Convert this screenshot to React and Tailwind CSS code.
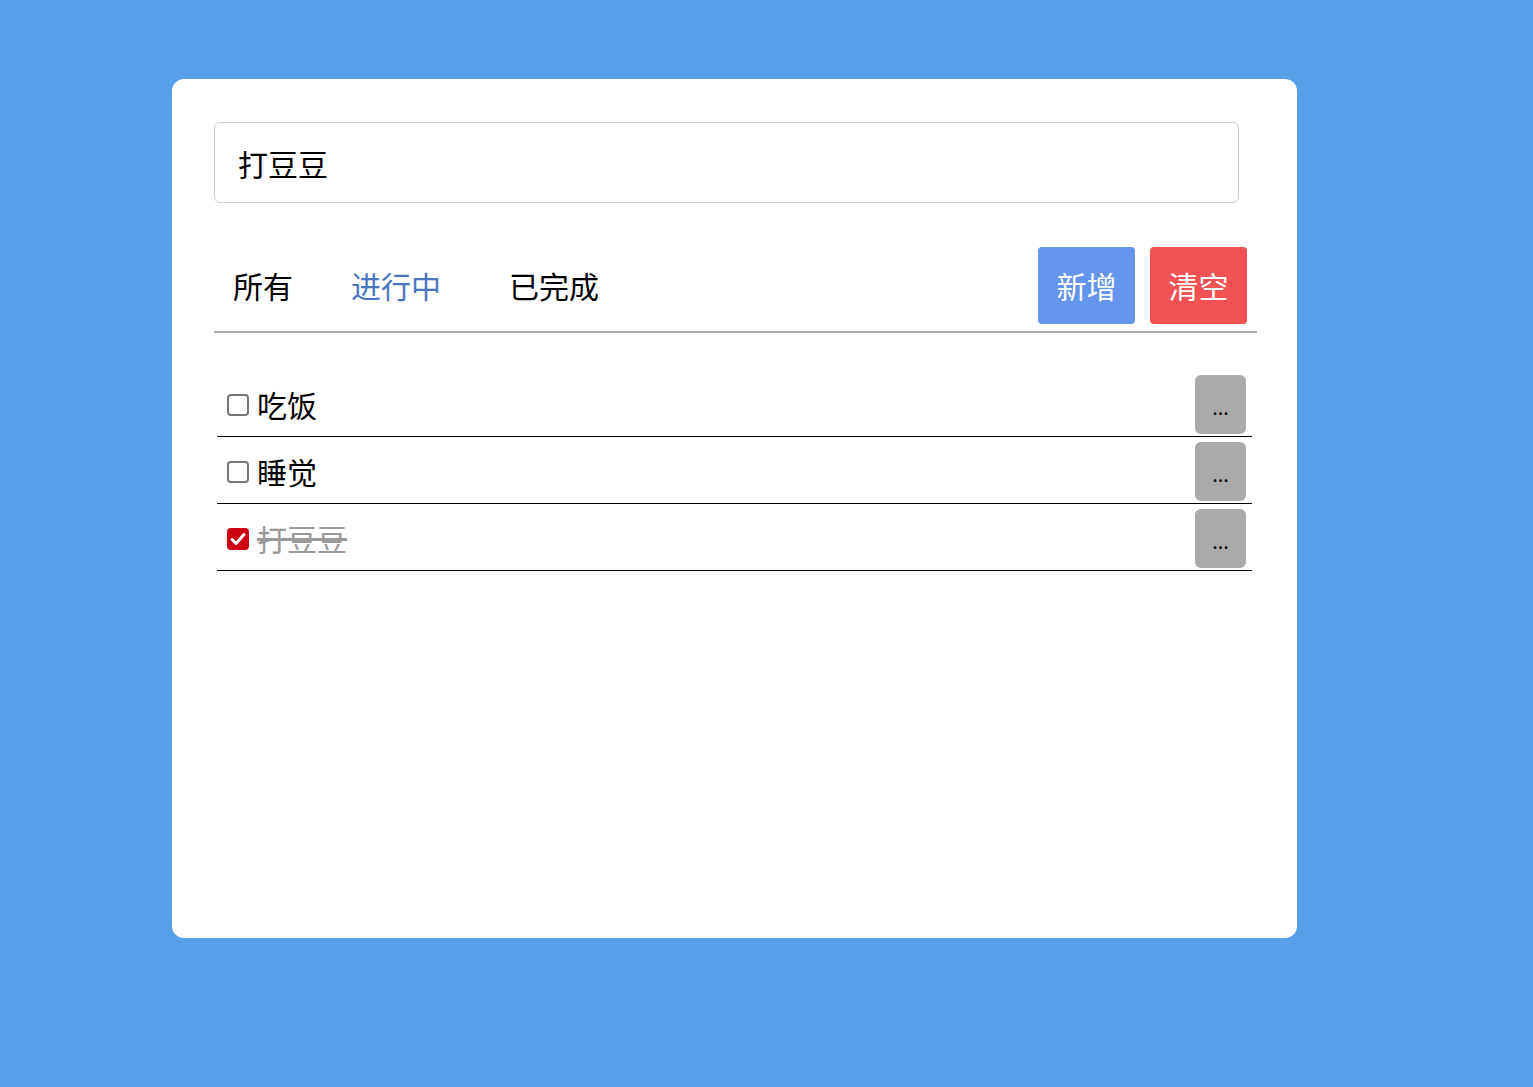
import { useState } from 'react';

const font = { fontFamily: '"Noto Sans CJK SC", "Liberation Sans", sans-serif' };

function Check({ checked, onChange }) {
  return (
    <span className="relative w-[22px] h-[22px] flex-shrink-0">
      <input
        type="checkbox"
        checked={checked}
        onChange={onChange}
        className="appearance-none block w-[22px] h-[22px] m-0 rounded-[4px] border-2 border-[#767676] bg-white checked:bg-[#cc0011] checked:border-[#cc0011]"
      />
      {checked && (
        <svg viewBox="0 0 22 22" className="absolute inset-0 w-[22px] h-[22px] pointer-events-none">
          <path d="M5 11.5l4 4 8-9" fill="none" stroke="white" strokeWidth="3" strokeLinecap="round" strokeLinejoin="round" />
        </svg>
      )}
    </span>
  );
}

export default function App() {
  const [text, setText] = useState('打豆豆');
  const [todos, setTodos] = useState([
    { id: 1, title: '吃饭', done: false },
    { id: 2, title: '睡觉', done: false },
    { id: 3, title: '打豆豆', done: true },
  ]);

  function toggle(id) {
    setTodos(ts => ts.map(t => t.id === id ? { ...t, done: !t.done } : t));
  }

  return (
    <div className="min-h-screen bg-[#56a0ea] pt-[79px] pl-[172px]" style={font}>
      <div className="w-[1125px] h-[859px] bg-white rounded-[12px] pt-[43px] pl-[42px]">
        <input
          value={text}
          onChange={e => setText(e.target.value)}
          className="block w-[1025px] h-[81px] border border-[#cccccc] rounded-[6px] px-[23px] text-[30px] text-black outline-none"
        />

        <div className="mt-[44px] w-[1043px] h-[86px] border-b-2 border-[#aaaaaa] flex items-start pr-[10px]">
          <div className="h-[76px] flex items-center text-[30px] text-black ml-[19px]">所有</div>
          <div className="h-[76px] flex items-center text-[30px] text-[#4a76c0] ml-[58px]">进行中</div>
          <div className="h-[76px] flex items-center text-[30px] text-black ml-[68px]">已完成</div>
          <div className="ml-auto flex gap-[15px]">
            <button className="w-[97px] h-[77px] rounded-[4px] bg-[#6495ed] text-white text-[30px]">新增</button>
            <button className="w-[97px] h-[77px] rounded-[4px] bg-[#f25252] text-white text-[30px]">清空</button>
          </div>
        </div>

        <div className="mt-[37px] ml-[3px] w-[1035px]">
          {todos.map(t => (
            <div key={t.id} className="flex items-center pt-[5px] pb-[2px] pl-[10px] pr-[6px] border-b border-black">
              <Check checked={t.done} onChange={() => toggle(t.id)} />
              <span className={`ml-[8px] text-[30px] leading-none -mt-[2px] ${t.done ? 'text-[#999999] line-through' : 'text-black'}`}>{t.title}</span>
              <button className="ml-auto w-[51px] h-[59px] rounded-[6px] bg-[#aaaaaa] text-black text-[20px] pt-[4px]">...</button>
            </div>
          ))}
        </div>
      </div>
    </div>
  );
}
